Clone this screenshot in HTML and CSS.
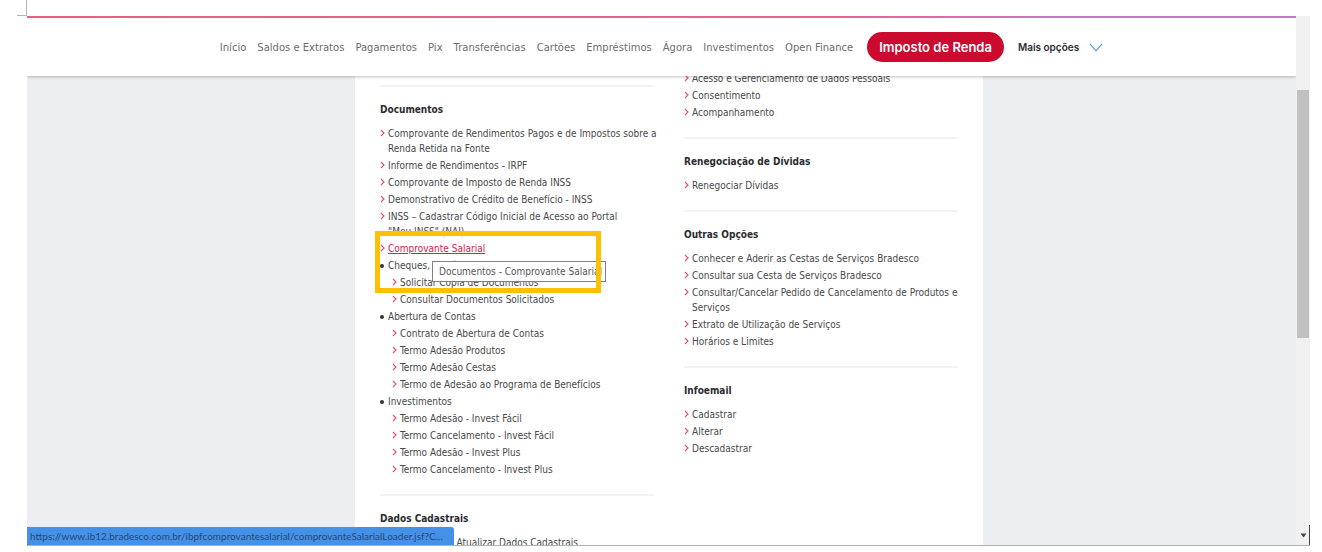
FILE: index.html
```
<!DOCTYPE html>
<html lang="pt-BR">
<head>
<meta charset="utf-8">
<title>Bradesco - Documentos</title>
<link rel="stylesheet" href="styles.css">
</head>
<body>
<svg width="0" height="0" class="defs" aria-hidden="true">
  <symbol id="arrow" viewBox="0 0 5 8"><path d="M1 1l3 3-3 3" fill="none" stroke="currentColor" stroke-width="1.2"/></symbol>
</svg>
<div class="corner"></div>
<div class="window">
  <div class="view">
    <header class="topbar">
      <nav class="nav">
        <a href="#">Início</a>
        <a href="#">Saldos e Extratos</a>
        <a href="#">Pagamentos</a>
        <a href="#">Pix</a>
        <a href="#">Transferências</a>
        <a href="#">Cartões</a>
        <a href="#">Empréstimos</a>
        <a href="#">Ágora</a>
        <a href="#">Investimentos</a>
        <a href="#">Open Finance</a>
        <a href="#" class="pill">Imposto de Renda</a>
        <button type="button" class="more">Mais opções
          <svg width="14" height="9" viewBox="0 0 14 9" aria-hidden="true"><path d="M1 .8l6 7 6-7" fill="none" stroke="#5b9bd8" stroke-width="1.2"/></svg>
        </button>
      </nav>
    </header>
    <main class="page">
      <div class="panel">
        <div class="column">
          <section class="section first">
            <h2>Documentos</h2>
            <ul class="links">
              <li><svg class="arrow"><use href="#arrow"/></svg><a href="#">Comprovante de Rendimentos Pagos e de Impostos sobre a<br>Renda Retida na Fonte</a></li>
              <li><svg class="arrow"><use href="#arrow"/></svg><a href="#">Informe de Rendimentos - IRPF</a></li>
              <li><svg class="arrow"><use href="#arrow"/></svg><a href="#">Comprovante de Imposto de Renda INSS</a></li>
              <li><svg class="arrow"><use href="#arrow"/></svg><a href="#">Demonstrativo de Crédito de Benefício - INSS</a></li>
              <li><svg class="arrow"><use href="#arrow"/></svg><a href="#">INSS – Cadastrar Código Inicial de Acesso ao Portal<br>"Meu INSS" (NAI)</a></li>
              <li class="current"><svg class="arrow"><use href="#arrow"/></svg><a href="#">Comprovante Salarial</a>
                <span class="tooltip" role="tooltip">Documentos - Comprovante Salarial</span>
                <span class="highlight"></span>
              </li>
            </ul>
            <h3>Cheques, Depósitos e Saques</h3>
            <ul class="links sub">
              <li><svg class="arrow"><use href="#arrow"/></svg><a href="#">Solicitar Cópia de Documentos</a></li>
              <li><svg class="arrow"><use href="#arrow"/></svg><a href="#">Consultar Documentos Solicitados</a></li>
            </ul>
            <h3>Abertura de Contas</h3>
            <ul class="links sub">
              <li><svg class="arrow"><use href="#arrow"/></svg><a href="#">Contrato de Abertura de Contas</a></li>
              <li><svg class="arrow"><use href="#arrow"/></svg><a href="#">Termo Adesão Produtos</a></li>
              <li><svg class="arrow"><use href="#arrow"/></svg><a href="#">Termo Adesão Cestas</a></li>
              <li><svg class="arrow"><use href="#arrow"/></svg><a href="#">Termo de Adesão ao Programa de Benefícios</a></li>
            </ul>
            <h3>Investimentos</h3>
            <ul class="links sub">
              <li><svg class="arrow"><use href="#arrow"/></svg><a href="#">Termo Adesão - Invest Fácil</a></li>
              <li><svg class="arrow"><use href="#arrow"/></svg><a href="#">Termo Cancelamento - Invest Fácil</a></li>
              <li><svg class="arrow"><use href="#arrow"/></svg><a href="#">Termo Adesão - Invest Plus</a></li>
              <li><svg class="arrow"><use href="#arrow"/></svg><a href="#">Termo Cancelamento - Invest Plus</a></li>
            </ul>
          </section>
          <section class="section">
            <h2>Dados Cadastrais</h2>
            <ul class="links">
              <li><svg class="arrow"><use href="#arrow"/></svg><a href="#">Consultar e/ou Atualizar Dados Cadastrais</a></li>
            </ul>
          </section>
        </div>
        <div class="column">
          <ul class="links">
            <li><svg class="arrow"><use href="#arrow"/></svg><a href="#">Acesso e Gerenciamento de Dados Pessoais</a></li>
            <li><svg class="arrow"><use href="#arrow"/></svg><a href="#">Consentimento</a></li>
            <li><svg class="arrow"><use href="#arrow"/></svg><a href="#">Acompanhamento</a></li>
          </ul>
          <section class="section">
            <h2>Renegociação de Dívidas</h2>
            <ul class="links">
              <li><svg class="arrow"><use href="#arrow"/></svg><a href="#">Renegociar Dívidas</a></li>
            </ul>
          </section>
          <section class="section">
            <h2>Outras Opções</h2>
            <ul class="links">
              <li><svg class="arrow"><use href="#arrow"/></svg><a href="#">Conhecer e Aderir as Cestas de Serviços Bradesco</a></li>
              <li><svg class="arrow"><use href="#arrow"/></svg><a href="#">Consultar sua Cesta de Serviços Bradesco</a></li>
              <li><svg class="arrow"><use href="#arrow"/></svg><a href="#">Consultar/Cancelar Pedido de Cancelamento de Produtos e<br>Serviços</a></li>
              <li><svg class="arrow"><use href="#arrow"/></svg><a href="#">Extrato de Utilização de Serviços</a></li>
              <li><svg class="arrow"><use href="#arrow"/></svg><a href="#">Horários e Limites</a></li>
            </ul>
          </section>
          <section class="section">
            <h2>Infoemail</h2>
            <ul class="links">
              <li><svg class="arrow"><use href="#arrow"/></svg><a href="#">Cadastrar</a></li>
              <li><svg class="arrow"><use href="#arrow"/></svg><a href="#">Alterar</a></li>
              <li><svg class="arrow"><use href="#arrow"/></svg><a href="#">Descadastrar</a></li>
            </ul>
          </section>
        </div>
      </div>
    </main>
    <div class="status">https://www.ib12.bradesco.com.br/ibpfcomprovantesalarial/comprovanteSalarialLoader.jsf?C...</div>
  </div>
  <div class="scrollbar">
    <div class="space-above"></div>
    <div class="thumb"></div>
    <div class="space-below"></div>
    <div class="scroll-end"><svg width="7" height="5" viewBox="0 0 7 5" aria-hidden="true"><path d="M.5.5h6l-3 4z" fill="#504545"/></svg></div>
  </div>
</div>
</body>
</html>
```
FILE: styles.css
```
* { box-sizing: border-box; }

body {
  margin: 0;
  height: 100vh;
  display: flex;
  flex-direction: column;
  padding: 0 12px 6px 17px;
  overflow: hidden;
  background: #fff;
  color: #48484a;
  font: 10px/15px "DejaVu Sans Condensed", "DejaVu Sans", sans-serif;
}

a { color: inherit; text-decoration: none; }
ul, h2, h3 { margin: 0; padding: 0; }
ul { list-style: none; }
.defs { position: absolute; }

.corner {
  flex: none;
  width: 10px;
  height: 16px;
  border-right: 1px solid #b5b5b5;
  border-bottom: 1px solid #b5b5b5;
}

.window {
  flex: 1;
  min-height: 0;
  display: flex;
  margin-left: 10px;
  border-bottom: 1px solid #a9b3ba;
}

.view {
  position: relative;
  flex: 1;
  min-width: 0;
  display: flex;
  flex-direction: column;
  overflow: hidden;
  background: #edeef0;
}

/* Top navigation */
.topbar {
  position: relative;
  z-index: 2;
  flex: none;
  height: 60px;
  padding-top: 2px;
  background: linear-gradient(90deg, #ea5f7f, #e8638f 60%, #df6ba4 72%, #c673c4 80%) top / 100% 2px no-repeat #fff;
  box-shadow: 0 1px 3px rgba(0, 0, 0, .25);
}

.nav {
  height: 100%;
  display: flex;
  align-items: center;
  justify-content: center;
  gap: 11px;
  color: #6c6c70;
  font-family: "DejaVu Sans", sans-serif;
  white-space: nowrap;
}

.pill {
  margin: 0 3px;
  padding: 0 12px;
  border-radius: 15px;
  background: #cc092f;
  color: #fff;
  font: 600 13px/30px Inter, sans-serif;
}

.more {
  display: flex;
  align-items: center;
  gap: 10px;
  padding: 0;
  border: 0;
  background: none;
  color: #2d2d33;
  font: 600 10px/15px Inter, sans-serif;
}

/* Content */
.page {
  flex: 1;
  min-height: 0;
  display: flex;
  justify-content: center;
  margin-top: -5px;
  padding-left: 15px;
}

.panel {
  flex: 0 1 628px;
  display: grid;
  grid-template-columns: 1fr 1fr;
  gap: 30px;
  padding: 0 25px;
  background: #fff;
  white-space: nowrap;
}

.column { min-width: 0; }

.section {
  margin-top: 15px;
  padding-top: 15px;
  border-top: 2px solid #f3f3f3;
}

.first { margin-top: 14px; }

h2 {
  margin-bottom: 8px;
  color: #2c2c30;
  font-size: 10px;
  line-height: 16px;
}

.links { display: flow-root; }

.links li {
  position: relative;
  display: flex;
  gap: 3px;
  margin-bottom: 2px;
}

.arrow {
  flex: none;
  width: 5px;
  height: 8px;
  margin-top: 3px;
  color: #e2566f;
}

.sub { padding-left: 12px; }

h3 {
  display: flex;
  align-items: center;
  gap: 4px;
  margin-bottom: 2px;
  font-size: 10px;
  font-weight: 400;
}

h3::before {
  content: "";
  width: 4px;
  height: 4px;
  border-radius: 50%;
  background: #333;
}

.current a { color: #d3224d; text-decoration: underline; }

.tooltip {
  position: absolute;
  z-index: 1;
  left: 52px;
  top: 20px;
  width: 174px;
  padding: 2px 6px;
  border: 1px solid #808080;
  background: #fff;
  color: #55555a;
}

.highlight {
  position: absolute;
  z-index: 1;
  left: -5px;
  top: -10px;
  width: 226px;
  height: 62px;
  border: 5px solid #ffc000;
}

.status {
  position: absolute;
  z-index: 3;
  left: 0;
  bottom: 0;
  width: 427px;
  padding: 2px 3px 1px;
  border-top-right-radius: 3px;
  background: #4591e8;
  color: #27496f;
  font-family: Lato, sans-serif;
  white-space: nowrap;
}

/* Scrollbar */
.scrollbar {
  flex: none;
  width: 14px;
  display: flex;
  flex-direction: column;
  padding: 0 1px;
  background: #f1f1f1;
}

.space-above { flex: 74; }
.thumb { flex: 248; background: #c1c1c1; }
.space-below { flex: 187; }

.scroll-end {
  height: 20px;
  display: grid;
  place-items: center;
  margin-right: -1px;
  border-right: 1px solid #444;
}
```
